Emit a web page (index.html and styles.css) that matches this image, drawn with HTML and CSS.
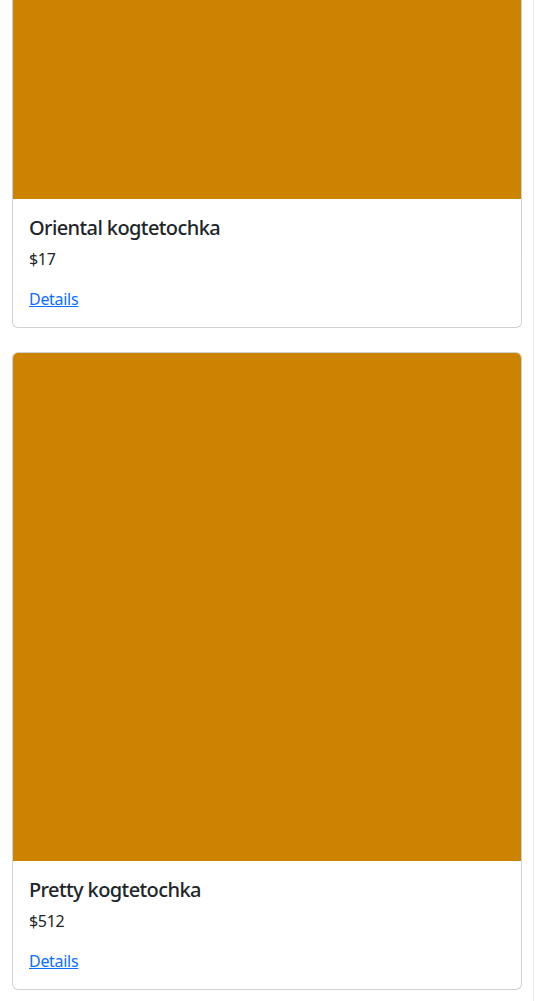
FILE: index.html
```html
<!DOCTYPE html>
<html lang="en">
<head>
<meta charset="utf-8">
<title>Kogtetochki</title>
<link rel="stylesheet" href="styles.css">
</head>
<body>
<div class="page">
  <div class="card card--cut">
    <div class="card-img card-img--cut"></div>
    <div class="card-body">
      <h5 class="card-title">Oriental kogtetochka</h5>
      <p class="card-text">$17</p>
      <a class="card-link" href="#">Details</a>
    </div>
  </div>
  <div class="card">
    <div class="card-img"></div>
    <div class="card-body">
      <h5 class="card-title">Pretty kogtetochka</h5>
      <p class="card-text">$512</p>
      <a class="card-link" href="#">Details</a>
    </div>
  </div>
  <div class="card card--next"></div>
</div>
</body>
</html>
```
FILE: styles.css
```css
html, body {
  margin: 0;
  padding: 0;
  background: #fff;
  overflow: hidden;
}
body {
  font-family: "Noto Sans", "Open Sans", "Liberation Sans", sans-serif;
  font-size: 16px;
  line-height: 1.5;
  color: #212529;
}
.page {
  box-sizing: border-box;
  width: 534px;
  height: 1001px;
  padding: 0 11px 0 12px;
  border-right: 1px solid #ececec;
  display: flex;
  flex-direction: column;
  gap: 24px;
  overflow: hidden;
}
.card {
  flex: none;
  border: 1px solid rgba(0, 0, 0, 0.175);
  border-radius: 6px;
  overflow: hidden;
  background: #fff;
}
.card--cut {
  border-top: 0;
  border-top-left-radius: 0;
  border-top-right-radius: 0;
}
.card--next {
  margin-top: -13px;
  height: 10px;
}
.card-img {
  height: 508px;
  background: #cc8400;
}
.card-img--cut {
  height: 199px;
}
.card-body {
  padding: 16px;
  letter-spacing: -0.3px;
}
.card-title {
  margin: 0 0 8px;
  padding-top: 1px;
  height: 23px;
  font-size: 20px;
  line-height: 24px;
  font-weight: 500;
  letter-spacing: -0.6px;
}
.card-text {
  margin: 0 0 16px;
}
.card-link {
  color: #0d6efd;
  text-decoration: underline;
}
```
